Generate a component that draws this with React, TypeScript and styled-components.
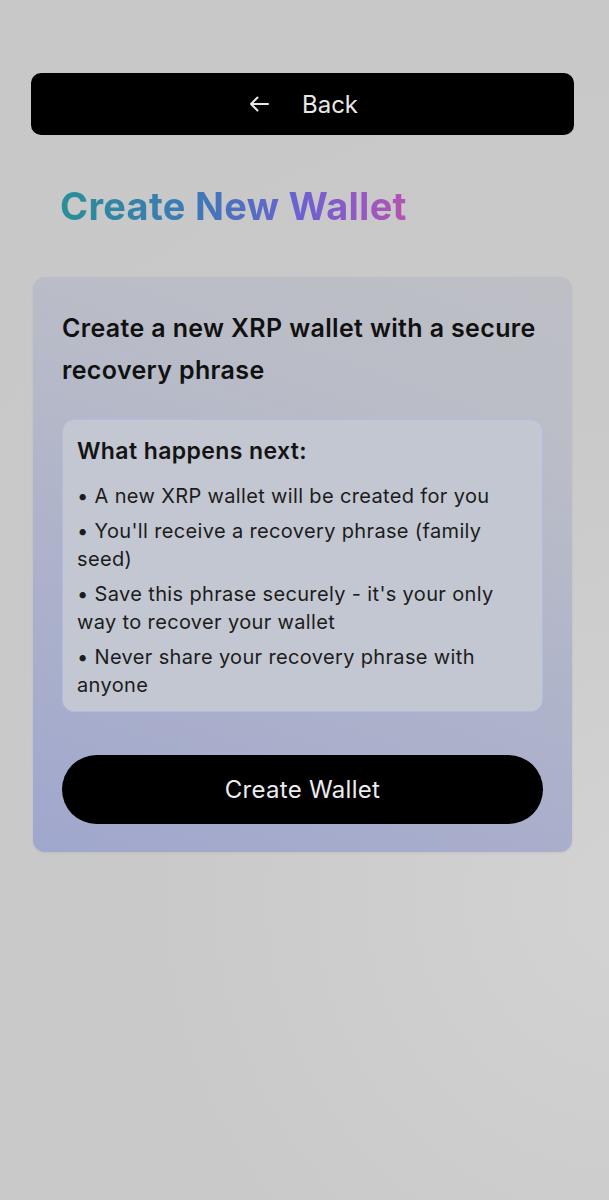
import React from "react"
import styled, { createGlobalStyle } from "styled-components"

const steps = [
  "A new XRP wallet will be created for you",
  "You'll receive a recovery phrase (family seed)",
  "Save this phrase securely - it's your only way to recover your wallet",
  "Never share your recovery phrase with anyone",
]

const BackArrow = () => (
  <svg width="20" height="16" viewBox="0 0 20 16" fill="none">
    <path
      d="M19 8H2M8.5 1.5L2 8l6.5 6.5"
      stroke="currentColor"
      strokeWidth="2"
      strokeLinecap="round"
      strokeLinejoin="round"
    />
  </svg>
)

const App = () => {
  return (
    <Page>
      <GlobalStyle />
      <BackButton>
        <BackArrow />
        <span>Back</span>
      </BackButton>
      <Title>Create New Wallet</Title>
      <Card>
        <Heading>Create a new XRP wallet with a secure recovery phrase</Heading>
        <InfoBox>
          <InfoTitle>What happens next:</InfoTitle>
          <StepList>
            {steps.map((s) => (
              <Step key={s}>• {s}</Step>
            ))}
          </StepList>
        </InfoBox>
        <CreateButton>Create Wallet</CreateButton>
      </Card>
    </Page>
  )
}

export default App

const GlobalStyle = createGlobalStyle`
  html, body {
    margin: 0;
    padding: 0;
    background: #c8c8c8;
  }
  body {
    font-family: Inter, "Noto Sans", sans-serif;
    -webkit-font-smoothing: antialiased;
  }
`

const Page = styled.div`
  min-height: 1200px;
  box-sizing: border-box;
  padding: 73px 35px 0 31px;
  background: radial-gradient(circle at 105% 75%, #d3d3d3 0%, #c9c9c9 45%, #c8c8c8 100%);
`

const BackButton = styled.button`
  width: 100%;
  height: 62px;
  border: none;
  border-radius: 10px;
  background: #000;
  color: #e8e8e8;
  display: flex;
  align-items: center;
  justify-content: center;
  gap: 33px;
  font-family: inherit;
  font-size: 24px;
  font-weight: 400;
  padding: 0 0 0 2px;
`

const Title = styled.h1`
  display: inline-block;
  margin: 48px 0 48px 29px;
  font-size: 38px;
  line-height: 46px;
  font-weight: 700;
  letter-spacing: 0.3px;
  background: linear-gradient(90deg, #288f98 0%, #3f78b8 40%, #6a62d0 68%, #8a5ac8 82%, #b553b0 100%);
  -webkit-background-clip: text;
  background-clip: text;
  color: transparent;
`

const Card = styled.div`
  margin: 0 2px;
  padding: 30px 29px 28px;
  border-radius: 12px;
  background: linear-gradient(20deg, #a0a7cd 0%, #aeb2ca 40%, #babdc7 75%, #bebfc5 100%);
  box-shadow: 0 1px 3px rgba(0, 0, 0, 0.06);
`

const Heading = styled.h2`
  margin: 0 0 28px;
  font-size: 25px;
  line-height: 42px;
  font-weight: 600;
  color: #111;
  letter-spacing: 0.35px;
`

const InfoBox = styled.div`
  padding: 14px 15px 12px 14px;
  border-radius: 12px;
  background: #c3c7d1;
  border: 1px solid #aebde0;
`

const InfoTitle = styled.h3`
  margin: 0 0 14px;
  font-size: 23px;
  line-height: 34px;
  font-weight: 600;
  color: #141414;
  letter-spacing: 0.4px;
`

const StepList = styled.div`
  display: flex;
  flex-direction: column;
  gap: 7px;
`

const Step = styled.div`
  font-size: 20px;
  line-height: 28px;
  color: #1c1c1c;
  letter-spacing: 0.35px;
`

const CreateButton = styled.button`
  width: 100%;
  height: 69px;
  margin-top: 43px;
  border: none;
  border-radius: 35px;
  background: #000;
  color: #ececec;
  font-family: inherit;
  font-size: 24px;
  font-weight: 400;
  letter-spacing: 0.3px;
`
